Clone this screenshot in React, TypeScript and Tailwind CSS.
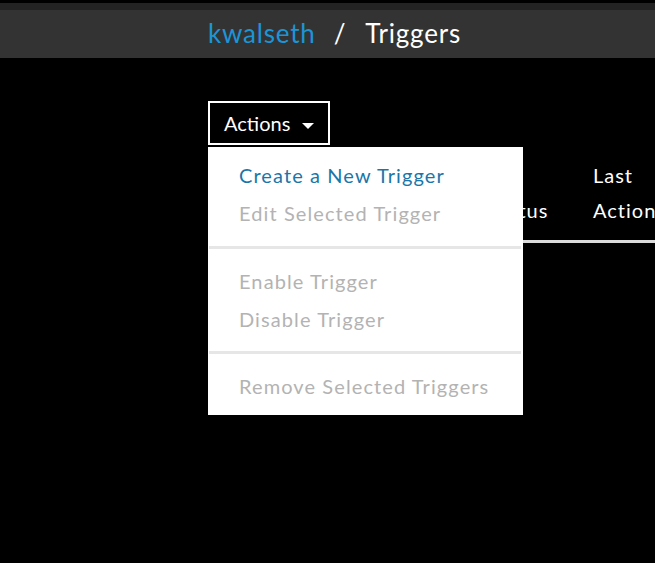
import React from "react";

export default function App() {
  const font = { fontFamily: "Lato, 'Open Sans', sans-serif" };
  return (
    <div className="w-[655px] h-[563px] bg-black overflow-hidden relative" style={font}>
      <div className="h-[3px] bg-black" />
      <div className="h-[7px] bg-[#232323]" />
      <div className="h-[48px] bg-[#333333] flex items-center pl-[208px] text-[26px] leading-none tracking-[0.8px] pb-[3px]">
        <span className="text-[#1c95d6]">kwalseth</span>
        <span className="text-white ml-[18px] mr-[19px]">/</span>
        <span className="text-white">Triggers</span>
      </div>
      <div className="pl-[208px] pt-[43px]">
        <div className="relative">
          <div className="w-[122px] h-[44px] border-2 border-white flex items-center pl-[14px] text-white text-[20px]">
            <span>Actions</span>
            <svg className="ml-[12px] mt-[6px]" width="12" height="7" viewBox="0 0 12 7">
              <path d="M0 0 L12 0 L6 6 Z" fill="#fff" />
            </svg>
          </div>
          <div className="flex mt-[12px] h-[86px] border-b-[3px] border-[#dcdcdc] text-white text-[20px] leading-[35px] tracking-[1px]">
            <div className="w-[280px] shrink-0" />
            <div className="w-[105px] shrink-0 flex items-end pb-[12px]">Status</div>
            <div className="flex flex-col justify-end pb-[12px] whitespace-nowrap">
              <span>Last</span>
              <span>Action</span>
            </div>
          </div>
          <div className="absolute left-0 top-[46px] w-[315px] bg-white text-[20px] tracking-[1.1px] pt-[9px] pb-[10px]">
            <div className="h-[38px] flex items-center pl-[31px] text-[#1a76a9]">Create a New Trigger</div>
            <div className="h-[38px] flex items-center pl-[31px] text-[#b3b3b3]">Edit Selected Trigger</div>
            <div className="h-[3px] bg-[#e6e6e6] mt-[14px] mb-[13px] mr-[2px] ml-[1px]" />
            <div className="h-[38px] flex items-center pl-[31px] text-[#b3b3b3] mt-[1px]">Enable Trigger</div>
            <div className="h-[38px] flex items-center pl-[31px] text-[#b3b3b3]">Disable Trigger</div>
            <div className="h-[3px] bg-[#e6e6e6] my-[13px] mr-[2px] ml-[1px]" />
            <div className="h-[38px] flex items-center pl-[31px] text-[#b3b3b3] mt-[1px]">Remove Selected Triggers</div>
          </div>
        </div>
      </div>
    </div>
  );
}
